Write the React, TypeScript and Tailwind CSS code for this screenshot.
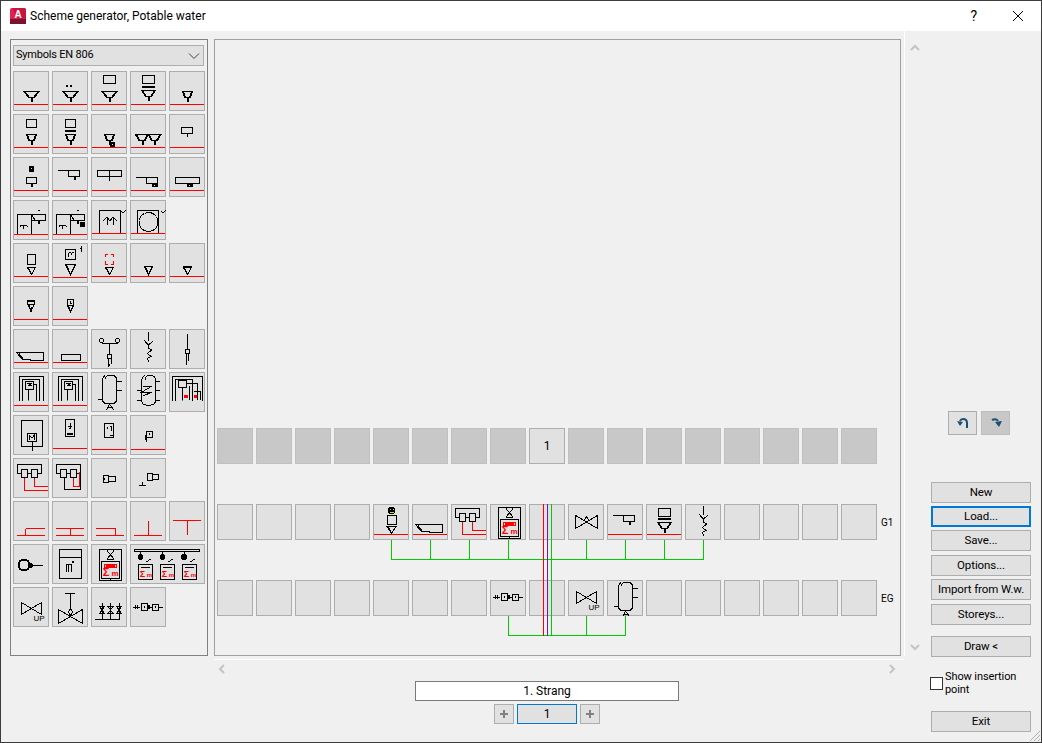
import { ReactNode } from "react";

interface Sym {
  k?: string; // black strokes
  fill?: string; // black fills
  r?: string; // red strokes
  rf?: string; // red fills
  g?: string;
  line?: boolean; // red base line
  lineY?: number;
  wide?: boolean;
  dy?: number; // shift when placed in the 36px scheme cells
  extra?: ReactNode;
}

const R = (x: number, y: number, w: number, h: number) => `M${x} ${y}h${w}v${h}h${-w}Z`;
const F = (cx: number, y: number, w: number) =>
  `M${cx - w / 2} ${y}H${cx + w / 2}L${cx + 3} ${y + 6}H${cx - 3}ZM${cx - w / 2 + 1} ${y}L${cx - 2} ${y + 6}M${cx + w / 2 - 1} ${y}L${cx + 2} ${y + 6}M${cx} ${y + 6}V${y + 10}M${cx + 1} ${y + 6}V${y + 10}`;
const T = (cx: number, y: number, w: number, h: number) =>
  `M${cx - w / 2} ${y}H${cx + w / 2}L${cx} ${y + h}ZM${cx - w / 2 + 1} ${y}L${cx} ${y + h}`;
const BOWTIE = (x0: number, x1: number, y0: number, y1: number) =>
  `M${x0} ${y0}V${y1}L${x1} ${y0}V${y1}Z`;
const check = (x: number, y: number) => `M${x} ${y}l2 2l3 -3`;
const SQUIGGLE = "M18.5 3V12M14 11L18.5 16L23 12M15 13L19 17M18.5 17V19L21.5 21L17.5 24.5L21 27.5L17.5 29.5L19 33";
const TANK =
  "M14 7.5Q14.5 3.5 18 3.5H21.5Q25.5 3.5 25.5 8V27Q25.5 31.5 21.5 31.5H15.5Q11.5 31.5 11.5 27V8Q11.5 5 14 3.5M25.5 9.5H30.5M25.5 18.5H30.5M11.5 27.5H6.5M18.5 32L15.5 38M18.5 32L22.5 38M16.5 35.5H21.5";
const TWIN = "M4.5 15.5V6.5H28.5V15.5H25M4.5 15.5H8M15 15.5H18.5" + R(8.5, 11.5, 6, 8) + R(18.5, 11.5, 6, 8);
const REDTANK = "M8.5 5.5H30.5V36.5H8.5ZM10.5 17.5H28.5V34.5H10.5ZM15 5.5H24M16 6.5L23 15M23 6.5L16 15M16 15.5H23M19.5 34.5V36.5";
const SHOWER = "M12 21L16 17L19 21M16.5 17V25M19 21L22 17L26 21M22.5 17V25";
const label = (x: number, y: number, s: string, size: number, fill = "#000", weight = "700") => (
  <text x={x} y={y} fontSize={size} fill={fill} textAnchor="middle" fontFamily="'Liberation Sans', sans-serif" fontWeight={weight}>
    {s}
  </text>
);
const sigma = (x: number, y: number, size = 7) => (
  <>
    {label(x, y, "Σ", size + 2, "#f00")}
    {label(x + size, y, "m", size - 1, "#f00")}
  </>
);
const dot = (x: number, y: number) => <rect x={x} y={y} width="1" height="1" fill="#e1e1e1" />;

const s: Record<string, Sym> = {
  a1: { k: F(18.5, 20.5, 15), line: true },
  a2: { k: F(18.5, 20.5, 15), fill: R(14, 14, 2, 2) + R(18, 14, 2, 2), line: true },
  a3: { k: F(18.5, 20.5, 15) + R(12.5, 4.5, 12, 8), line: true },
  a4: { k: F(18.5, 19.5, 14) + R(12.5, 4.5, 12, 8), fill: R(12, 15, 13, 2), line: true },
  a5: { k: F(18.5, 20.5, 10), line: true },
  b1: { k: F(18.5, 20.5, 10) + R(13.5, 5.5, 10, 8), line: true },
  b2: { k: F(18.5, 20.5, 10) + R(13.5, 5.5, 10, 8), fill: R(13, 16, 11, 2), line: true },
  b3: { k: F(18.5, 20.5, 10), fill: R(19, 28, 5, 5), line: true, extra: dot(21, 30) },
  b4: { k: F(12, 20.5, 13) + F(24.5, 20.5, 13), line: true },
  b5: { k: R(12.5, 13.5, 11, 6) + "M18.5 19.5V23", line: true },
  c1: { k: R(13.5, 20.5, 10, 6), fill: R(16, 9, 5, 6) + R(18, 26, 1.5, 4), line: true, extra: dot(18, 11) },
  c2: { k: "M6 13.5H16.5" + R(16.5, 13.5, 11, 6), fill: R(22, 19, 2, 4), line: true },
  c3: { k: R(6.5, 13.5, 24, 6) + "M18.5 13.5V23.5", line: true },
  c4: { k: "M6 20.5H16.5" + R(16.5, 20.5, 11, 6), fill: R(22, 26, 6, 4), line: true, extra: dot(24, 28) },
  c5: { k: R(6.5, 20.5, 24, 6), fill: R(18, 26, 6, 4), line: true, extra: dot(20, 28) },
  d1: { k: R(4.5, 14.5, 14, 20) + R(18.5, 14.5, 14, 6) + "M7 25.5H14M10.5 25.5V29M7 25.5V27M14 25.5V27M18.5 14.5L22 20", fill: R(25, 20, 2, 4) + R(25, 10, 2, 1), line: true, lineY: 34 },
  d2: { k: R(4.5, 14.5, 14, 20) + R(18.5, 14.5, 14, 6) + "M7 25.5H14M10.5 25.5V29M7 25.5V27M14 25.5V27M18.5 14.5L22 20", fill: R(25, 20, 2, 4) + R(25, 10, 2, 1) + R(28, 22, 5, 5), line: true, lineY: 34 },
  d3: { k: R(8.5, 10.5, 21, 23) + SHOWER + check(30, 11), line: true, lineY: 33 },
  d4: { k: R(7.5, 10.5, 21, 23) + check(31, 11), extra: <circle cx="18.5" cy="22" r="9.5" fill="none" stroke="#000" strokeDasharray="4 0.5" />, line: true, lineY: 33 },
  e1: { k: R(14.5, 11.5, 8, 10) + T(18.5, 24.5, 8, 7), line: true },
  e2: { k: R(13.5, 6.5, 10, 10) + T(18.5, 21.5, 10, 10) + "M16.5 9.5V13.5M16.5 9.5H18.5M19.5 9.5H21.5M19.5 9.5V12", fill: R(29, 3, 1, 6) + R(28, 5, 1, 1), line: true, lineY: 34 },
  e3: { r: "M14.5 14V11.5H17M20 11.5H22.5V14M14.5 18V21.5H17M20 21.5H22.5V18", k: T(18.5, 24.5, 8, 7), line: true },
  e4: { k: T(18.5, 23.5, 8, 8), line: true },
  e5: { k: T(18.5, 24.5, 8, 7), fill: R(14, 23, 9, 2), line: true },
  f1: { k: R(14.5, 14.5, 7, 4) + T(18, 18.5, 6, 7) + "M18 21V25", fill: R(14, 14, 8, 2), line: true },
  f2: { k: R(15.5, 13.5, 6, 6) + T(18.5, 19.5, 6, 6) + "M18.5 15V17H20", line: true },
  g1: { k: "M3.5 23.5H30.5V31.5H17.5V30.5H9.5L3.5 23.5M6 24.5L10 30", line: true },
  g2: { k: R(9.5, 25.5, 19, 6), line: true },
  g3: { k: "M11 14.5H26.5M18.5 14.5V25" + R(16.5, 25.5, 4, 4) + "M17 29.5V38M20 29.5V35M17 38L19 35", extra: <><circle cx="10.5" cy="11.5" r="2" fill="none" stroke="#000" /><circle cx="26.5" cy="11.5" r="2" fill="none" stroke="#000" /></> },
  g4: { k: SQUIGGLE },
  g5: { k: "M18.5 5V20" + R(16.5, 20.5, 4, 4) + "M17.5 24.5V35.5M19.5 24.5V32" },
  h1: { k: "M6.5 29V4.5H30.5V29M9.5 29V7.5H26.5V29" + R(12.5, 9.5, 8, 8) + "M20.5 12.5H23.5V29M15.5 17.5V29M14 11.5H19L15 13.5H19", rf: R(9, 28, 1, 1) + R(26, 28, 1, 1), g: "M15 28.5H16", line: true },
  h2: { k: "M6.5 29V4.5H30.5V29M9.5 29V7.5H26.5V29" + R(12.5, 9.5, 8, 8) + "M20.5 12.5H23.5V29M15.5 17.5V29M14 11.5H19L15 13.5H19", rf: R(9, 28, 1, 1) + R(26, 28, 1, 1), g: "M15 28.5H16", line: true },
  h3: { k: TANK },
  h4: { k: "M15 8Q15 4 18.5 3.5H21.5Q25.5 4 25.5 8V28Q25.5 33 21 33H16Q12 33 11.5 28V8Q12 5 15 3.5M25.5 9.5H30M25.5 18.5H30M25.5 28.5H30M11.5 18.5H7M11.5 28.5H7M13 14H22L12 20H22L13 24" },
  h5: { k: "M3.5 28.5V4.5H33.5V28.5M6.5 28.5V7.5H23.5V28.5" + R(9.5, 8.5, 8, 7) + "M17.5 11.5H28V28M13 15.5V28M20.5 14V28M25 19H31.5V28", rf: R(15, 23, 4, 3) + R(25, 23, 4, 3), g: "M13 28.5H14" },
  i1: { k: R(8.5, 5.5, 21, 26) + R(14.5, 18.5, 9, 8) + "M19 26.5V36M16 24.5V20.5L19 23L21 20.5V24.5" },
  i2: { k: R(13.5, 4.5, 9, 17) + "M18 8V14M15.5 11H20L17 14", fill: R(15, 18, 6, 2), line: true, lineY: 33 },
  i3: { k: R(13.5, 8.5, 9, 14) + "M16.5 11.5V14M18.5 11.5H20V16", fill: R(19, 20, 3, 1), line: true, lineY: 34 },
  i4: { k: R(16.5, 16.5, 6, 6) + "M19 18V20", fill: R(15, 20, 2, 5) + R(15.5, 24, 1, 3), line: true, lineY: 34 },
  j1: { k: TWIN, r: "M11.5 19.5V32.5H35M21.5 19.5V28.5H35" },
  j2: { k: TWIN + "M12.5 19.5V31.5H28.5V15", r: "M21.5 19.5V28.5H28M25 28.5H27.5V14" },
  j3: { k: R(12.5, 17.5, 5, 7) + R(17.5, 18.5, 7, 5), fill: R(13, 20, 1, 2) },
  j4: { k: R(17.5, 15.5, 5, 7) + R(22.5, 16.5, 6, 5) + "M9 27.5H16M12.5 24V27.5" },
  l1: { r: "M4 34.5H32M12.5 34.5V27.5M12.5 27.5H32" },
  l2: { r: "M4 27.5H32M4 34.5H32M18.5 27.5V34.5" },
  l3: { r: "M5 27.5H24.5V34.5M5 34.5H33" },
  l4: { r: "M4 34.5H32M18.5 20V34.5" },
  l5: { r: "M4 19.5H32M18.5 19.5V34" },
  m1: { k: "M17 21.5H30M17 19V24L21 21.5Z", extra: <circle cx="11" cy="21" r="5.5" fill="none" stroke="#000" strokeWidth="2" /> },
  m2: { k: R(7.5, 5.5, 22, 29) + "M7.5 13.5H29.5M14 28V20H16V28M16 20H19V28", fill: R(20, 17, 2, 2) },
  m3: { k: REDTANK, r: R(13.5, 20.5, 12, 3), rf: R(15, 21, 9, 2), extra: sigma(15, 32, 9) },
  m4: {
    wide: true,
    k: R(4.5, 5.5, 65, 2) + R(8.5, 20.5, 14, 15) + R(30.5, 20.5, 14, 15) + R(52.5, 20.5, 14, 15) + "M11 23.5H20M33 23.5H42M55 23.5H64M16 18L21 15M38 18L43 15M60 18L65 15M10.5 8V10M32.5 8V10M54 8V10",
    extra: (
      <>
        <circle cx="10.5" cy="13" r="3" fill="#000" /><circle cx="32.5" cy="13" r="3" fill="#000" /><circle cx="54" cy="13" r="3" fill="#000" />
        {sigma(12.5, 33)}{sigma(34.5, 33)}{sigma(56.5, 33)}
      </>
    ),
  },
  n1: { k: BOWTIE(8.5, 28.5, 15.5, 27.5), extra: label(26, 34, "UP", 8, "#000", "400") },
  n2: { k: BOWTIE(6.5, 30.5, 22.5, 36.5) + "M13 6.5H23M18.5 6.5V22M18.5 22L21 25L18.5 28L16 25Z" },
  n3: { k: "M4 32.5H29M11 16V32M19.5 16V32M28 16V32M8.5 19.5H13.5L8.5 26.5H13.5ZM17 19.5H22L17 26.5H22ZM25.5 19.5H30.5L25.5 26.5H30.5Z" },
  n4: { k: "M3 20H10M5 18V22M7 18V22" + R(11.5, 16.5, 6, 7) + "M17.5 20H22.5" + R(22.5, 17.5, 6, 6) + "M28.5 20H33", fill: R(14, 19, 1, 2) + R(25, 19, 1, 2) + R(18, 18, 2, 4) },
};

const rows: Sym[][] = [
  [s.a1, s.a2, s.a3, s.a4, s.a5],
  [s.b1, s.b2, s.b3, s.b4, s.b5],
  [s.c1, s.c2, s.c3, s.c4, s.c5],
  [s.d1, s.d2, s.d3, s.d4],
  [s.e1, s.e2, s.e3, s.e4, s.e5],
  [s.f1, s.f2],
  [s.g1, s.g2, s.g3, s.g4, s.g5],
  [s.h1, s.h2, s.h3, s.h4, s.h5],
  [s.i1, s.i2, s.i3, s.i4],
  [s.j1, s.j2, s.j3, s.j4],
  [s.l1, s.l2, s.l3, s.l4, s.l5],
  [s.m1, s.m2, s.m3, s.m4],
  [s.n1, s.n2, s.n3, s.n4],
];

const Glyph = ({ sym, y = 0, h = 40 }: { sym: Sym; y?: number; h?: number }) => {
  const w = sym.wide ? 75 : 36;
  return (
    <svg viewBox={`0 ${y} ${w} ${h}`} width={w} height={h} className="block" fill="none" shapeRendering="crispEdges">
      {sym.fill && <path d={sym.fill} fill="#000" />}
      {sym.rf && <path d={sym.rf} fill="#f00" />}
      {sym.k && <path d={sym.k} stroke="#000" />}
      {sym.r && <path d={sym.r} stroke="#f00" />}
      {sym.g && <path d={sym.g} stroke="#0c0" />}
      {sym.extra}
      {sym.line && <path d={`M1 ${(sym.lineY ?? 33) + 0.5}H35`} stroke="#f00" />}
    </svg>
  );
};

const PaletteCell = ({ sym }: { sym: Sym }) => (
  <div className={`h-[40px] bg-[#e1e1e1] shadow-[inset_0_0_0_1px_#adadad] ${sym.wide ? "w-[75px]" : "w-[36px]"}`}>
    <Glyph sym={sym} />
  </div>
);

const top: ("one" | null)[] = Array.from({ length: 17 }, (_, i) => (i === 8 ? "one" : null));

const g1: (Sym | null)[] = [
  null, null, null, null,
  {
    k: R(14.5, 14.5, 9, 9) + T(18.5, 25.5, 9, 7),
    line: true,
    lineY: 33,
    extra: (
      <>
        <circle cx="18.5" cy="9.5" r="3.5" fill="#000" />
        <rect x="17" y="8" width="1" height="1" fill="#dd0" />
        <rect x="20" y="8" width="1" height="1" fill="#dd0" />
        <rect x="17" y="11" width="4" height="1" fill="#dd0" />
      </>
    ),
  },
  s.g1,
  { ...s.j1, dy: 2 },
  { ...s.m3, dy: 2 },
  null,
  { k: BOWTIE(7.5, 29.5, 14.5, 27.5) + "M15 20L18.5 16L22 20" },
  { ...s.c2, dy: 2, lineY: 32 },
  { k: F(18.5, 21.5, 14) + R(12.5, 7.5, 12, 8), fill: R(12, 17, 13, 2), line: true },
  { ...s.g4, dy: 1 },
  null, null, null, null,
];

const eg: (Sym | null)[] = [
  null, null, null, null, null, null, null, s.n4, null, { ...s.n1, dy: 4 }, { ...s.h3, dy: 1 }, null, null, null, null, null, null,
];

const Cell = ({ sym, dark, children }: { sym?: Sym | null; dark?: boolean; children?: ReactNode }) => (
  <div
    className={`w-[36px] h-[36px] flex items-center justify-center overflow-hidden shrink-0 ${
      dark ? "bg-[#c8c8c8] shadow-[inset_0_0_0_1px_#c0c0c0]" : "bg-[#e1e1e1] shadow-[inset_0_0_0_1px_#adadad]"
    }`}
  >
    {sym && <Glyph sym={sym} y={sym.dy ?? 3} h={36} />}
    {children}
  </div>
);

const Chevron = ({ d }: { d: string }) => (
  <svg width="10" height="8" viewBox="0 0 10 8" fill="none" stroke="#c4c4c4" strokeWidth="2">
    <path d={d} />
  </svg>
);

const PlusButton = () => (
  <button className="w-[20px] h-[20px] bg-[#e1e1e1] border border-[#adadad] flex items-center justify-center">
    <svg width="10" height="10" viewBox="0 0 10 10" fill="#808080">
      <rect x="1" y="4" width="8" height="2" />
      <rect x="4" y="1" width="2" height="8" />
    </svg>
  </button>
);

const SideButton = ({ children, mt, focus }: { children: ReactNode; mt: string; focus?: boolean }) => (
  <button
    className={`w-[100px] h-[21px] bg-[#e1e1e1] text-[11.5px] tracking-[-0.1px] leading-none text-black whitespace-nowrap ${mt} ${
      focus ? "border-2 border-[#0078d7]" : "border border-[#adadad]"
    }`}
  >
    {children}
  </button>
);

export default function App() {
  return (
    <div
      className="relative w-[1042px] h-[743px] flex flex-col overflow-hidden border border-[#3c3c3c] bg-[#f0f0f0] text-black"
      style={{ fontFamily: "Roboto, sans-serif" }}
    >
      <header className="h-[30px] shrink-0 bg-white flex items-center pl-[9px]">
        <svg width="16" height="16" viewBox="0 0 16 16" className="shrink-0">
          <rect x="0" y="0" width="16" height="16" rx="2" fill="#e51e4d" />
          <rect x="0" y="11" width="16" height="5" fill="#7a1230" />
          <path d="M2 0h12a2 2 0 0 1 2 2v9H8Z" fill="#c8173f" />
          <text x="8" y="9.5" fontSize="10" fontWeight="700" fill="#fff" textAnchor="middle" fontFamily="'Liberation Sans', sans-serif">A</text>
        </svg>
        <span className="ml-[4px] text-[12px]">Scheme generator, Potable water</span>
        <span className="ml-auto text-[14px] mr-[35px]">?</span>
        <svg width="12" height="12" viewBox="0 0 12 12" className="mr-[17px]" stroke="#000">
          <path d="M1 1L11 11M11 1L1 11" />
        </svg>
      </header>

      <div className="flex-1 flex pl-[9px]">
        {/* symbol palette */}
        <aside className="mt-[8px] w-[198px] h-[617px] border border-[#808080] pl-[2px] pt-[5px] shrink-0">
          <div className="w-[191px] h-[21px] bg-[#e1e1e1] border border-[#adadad] flex items-center justify-between pl-[2px] pr-[3px] text-[11px] tracking-[-0.2px]">
            <span>Symbols EN 806</span>
            <svg width="12" height="8" viewBox="0 0 12 8" fill="none" stroke="#444">
              <path d="M1 1.5L6 6.5L11 1.5" />
            </svg>
          </div>
          <div className="mt-[5px] flex flex-col gap-[3px]">
            {rows.map((row, i) => (
              <div key={i} className="flex gap-[3px]">
                {row.map((sym, j) => <PaletteCell key={j} sym={sym} />)}
              </div>
            ))}
          </div>
        </aside>

        {/* scheme */}
        <div className="ml-[6px] flex flex-col w-[711px] shrink-0">
          <div className="flex h-[625px]">
            <main className="relative mt-[8px] w-[687px] h-[617px] border border-[#a0a0a0] pl-[2px] pb-[39px] flex flex-col justify-end gap-[40px]">
              <div className="flex gap-[3px]">
                {top.map((c, i) => (
                  <Cell key={i} dark={c !== "one"}>
                    {c === "one" && <span className="text-[12px]">1</span>}
                  </Cell>
                ))}
              </div>
              <div className="flex gap-[3px] items-center">
                {g1.map((c, i) => <Cell key={i} sym={c} />)}
                <span className="ml-[1px] text-[10px]">G1</span>
              </div>
              <div className="flex gap-[3px] items-center">
                {eg.map((c, i) => <Cell key={i} sym={c} />)}
                <span className="ml-[1px] text-[10px]">EG</span>
              </div>
              <svg className="absolute left-[-1px] top-[-1px]" width="687" height="617" fill="none" shapeRendering="crispEdges">
                {/* coordinates here are relative to the panel corner at 214,39 */}
                <path d="M177.5 501V520.5H489.5V501M216.5 501V520M255.5 501V520M294.5 501V520M372.5 501V520M411.5 501V520M450.5 501V520" stroke="#0c0" />
                <path d="M294.5 577V596.5H411.5V577M372.5 577V596" stroke="#0c0" />
                <path d="M329.5 465V597" stroke="#f00" />
                <path d="M333.5 465V597" stroke="#7a10d0" />
                <path d="M337.5 465V597" stroke="#0c0" />
              </svg>
            </main>
            <div className="ml-[3px] w-[21px] border-l border-white flex flex-col items-center justify-between pt-[13px] pb-[5px]">
              <Chevron d="M1 6L5 2L9 6" />
              <Chevron d="M1 2L5 6L9 2" />
            </div>
          </div>
          <div className="mt-[3px] w-[690px] h-[18px] border-t border-white flex items-center justify-between px-[4px]">
            <svg width="8" height="10" viewBox="0 0 8 10" fill="none" stroke="#c4c4c4" strokeWidth="2"><path d="M6 1L2 5L6 9" /></svg>
            <svg width="8" height="10" viewBox="0 0 8 10" fill="none" stroke="#c4c4c4" strokeWidth="2" className="mr-[4px]"><path d="M2 1L6 5L2 9" /></svg>
          </div>
          <div className="w-[666px] mt-[4px] flex flex-col items-center">
            <div className="w-[264px] h-[20px] bg-white border border-[#7a7a7a] text-[12px] leading-[18px] text-center">1. Strang</div>
            <div className="mt-[3px] flex gap-[3px]">
              <PlusButton />
              <div className="w-[60px] h-[20px] bg-[#e1e1e1] border border-[#0078d7] text-[12px] leading-[18px] text-center">1</div>
              <PlusButton />
            </div>
          </div>
        </div>

        {/* commands */}
        <aside className="ml-[6px] w-[100px] flex flex-col">
          <div className="mt-[380px] pl-[17px] flex gap-[4px]">
            <button className="w-[29px] h-[24px] bg-[#e1e1e1] border border-[#adadad] flex items-center justify-center">
              <svg width="12" height="12" viewBox="0 0 12 12" fill="none" stroke="#1b4f72" strokeWidth="2">
                <path d="M10 11V6Q10 2 6 2Q4 2 3 4" />
                <path d="M0 4L6 5L3 9Z" fill="#1b4f72" stroke="none" />
              </svg>
            </button>
            <button className="w-[29px] h-[24px] bg-[#c8c8c8] border border-[#bdbdbd] flex items-center justify-center">
              <svg width="12" height="12" viewBox="0 0 12 12" fill="none" stroke="#1b4f72" strokeWidth="2">
                <path d="M2 3Q6 1 8 4" />
                <path d="M5 5L12 4L9 10Z" fill="#1b4f72" stroke="none" />
              </svg>
            </button>
          </div>
          <SideButton mt="mt-[47px]">New</SideButton>
          <SideButton mt="mt-[3px]" focus>Load...</SideButton>
          <SideButton mt="mt-[3px]">Save...</SideButton>
          <SideButton mt="mt-[4px]">Options...</SideButton>
          <SideButton mt="mt-[3px]">Import from W.w.</SideButton>
          <SideButton mt="mt-[4px]">Storeys...</SideButton>
          <SideButton mt="mt-[11px]">Draw &lt;</SideButton>
          <label className="mt-[13px] -ml-[1px] h-[26px] flex items-center gap-[2px] text-[11px] tracking-[-0.1px] leading-[13px]">
            <span className="w-[13px] h-[13px] bg-white border border-[#333] shrink-0" />
            <span>Show insertion<br />point</span>
          </label>
          <SideButton mt="mt-[15px]">Exit</SideButton>
        </aside>
      </div>
      <svg className="absolute right-0 bottom-0" width="12" height="12" viewBox="0 0 12 12" stroke="#b0b0b0">
        <path d="M1 11L11 1M5 11L11 5M9 11L11 9" />
      </svg>
    </div>
  );
}
